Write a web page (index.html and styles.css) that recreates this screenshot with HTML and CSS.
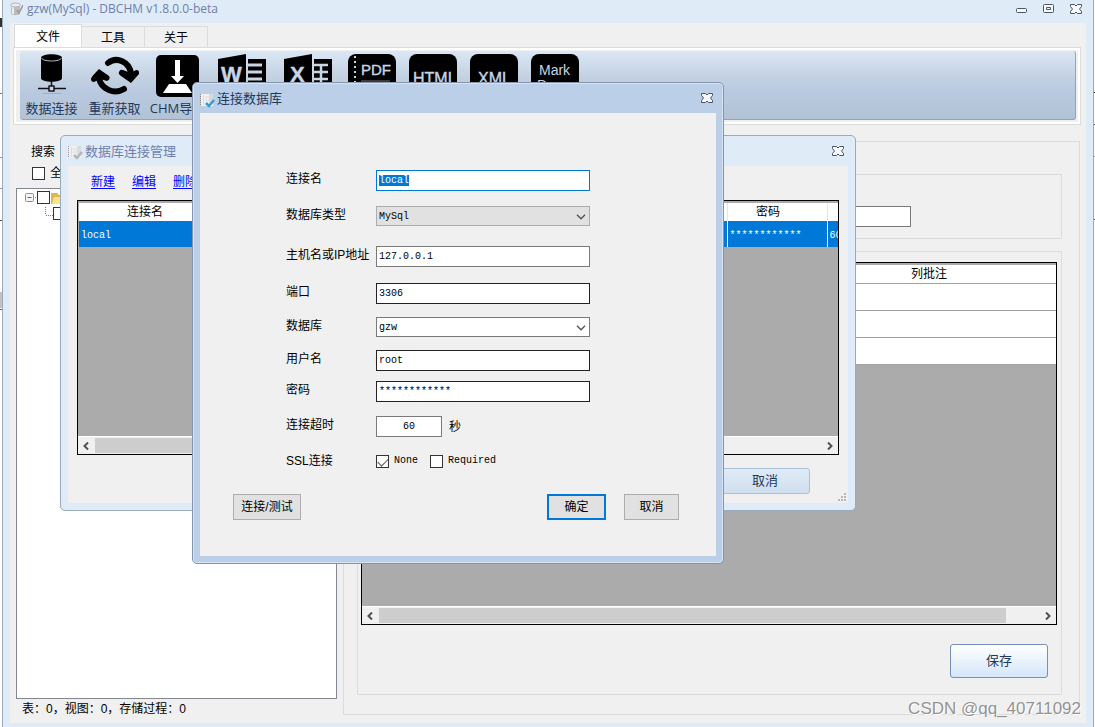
FILE: index.html
```
<!DOCTYPE html>
<html lang="zh-CN">
<head>
<meta charset="utf-8">
<title>gzw(MySql) - DBCHM v1.8.0.0-beta</title>
<link rel="stylesheet" href="styles.css">
</head>
<body>
<svg class="defs" width="0" height="0" aria-hidden="true">
  <symbol id="close" viewBox="0 0 12 10">
    <path d="M.5.5h4L6 2 7.500.5h4v2L9.500 5l2 2.500v2h-4L6 8 4.500 9.500h-4v-2l2-2.500-2-2.500z" fill="#f6f9fd" stroke="#4c5468"/>
  </symbol>
  <symbol id="left" viewBox="0 0 8 8"><path d="M6 .5 2.500 4 6 7.500" fill="none" stroke="#505050" stroke-width="2"/></symbol>
  <symbol id="right" viewBox="0 0 8 8"><path d="M2 .5 5.500 4 2 7.500" fill="none" stroke="#505050" stroke-width="2"/></symbol>
  <symbol id="down" viewBox="0 0 10 6"><path d="M1 .8 5 4.800 9 .8" fill="none" stroke="#505050" stroke-width="1.300"/></symbol>
  <symbol id="note" viewBox="0 0 15 15">
    <path d="M1 1h12v12H1z" fill="#f2f2f2"/><path d="M9 1h4v9H9z" fill="#d5d8dc"/>
    <path d="M.5 1v12" stroke="#888" stroke-dasharray="1 1"/><path d="M3.500 2v10M5 4h6M5 7h6" stroke="#dadada"/>
    <path d="m6 10 3 3 5-6" fill="none" stroke="currentColor" stroke-width="2.500"/>
  </symbol>
</svg>

<main class="window main-window">
  <header class="titlebar">
    <svg width="13" height="14" viewBox="0 0 13 14"><path d="M1 3v8c0 3 9 3 9 0V3z" fill="#bcbcbc"/><path d="M3 4v8" stroke="#eee" stroke-width="2"/><ellipse cx="5.500" cy="3" rx="5" ry="2" fill="#ececec" stroke="#b5b5b5"/><path d="m7 8 2 3 4-8" fill="none" stroke="#999" stroke-width="1.500"/></svg>
    <h1>gzw(MySql) - DBCHM v1.8.0.0-beta</h1>
    <div class="window-buttons">
      <button type="button" aria-label="最小化"><svg width="12" height="10"><rect x=".5" y="4.500" width="10" height="4" rx="1" fill="#f6f9fd" stroke="#4c5468"/></svg></button>
      <button type="button" aria-label="最大化"><svg width="12" height="10"><rect x=".5" y=".5" width="10" height="8" rx="1" fill="#f6f9fd" stroke="#4c5468"/><path d="M3.500 3.500h4v2h-4z" fill="none" stroke="#4c5468"/></svg></button>
      <button type="button" aria-label="关闭"><svg width="12" height="10"><use href="#close"/></svg></button>
    </div>
  </header>
  <div class="client">
    <nav class="tabs">
      <button type="button" class="tab active">文件</button>
      <button type="button" class="tab">工具</button>
      <button type="button" class="tab">关于</button>
    </nav>
    <div class="tab-page">
      <div class="toolbar">
        <button type="button" class="tool">
          <svg width="48" height="46" viewBox="0 1 48 46"><path d="M13 5c0-5 21-5 21 0v20c0 5-21 5-21 0z"/><path d="M13.500 5c1 4 19 4 20 0" fill="none" stroke="#a9b6c6"/><path d="M23.500 28v5M10 35.500h28" stroke="#111" stroke-width="1.500"/><rect x="21" y="33" width="5" height="5" fill="#c5d3e5" stroke="#000" stroke-width="1.300"/><path d="M14 40.500h20" stroke="#8fa0b4" opacity=".6"/></svg>
          数据连接</button>
        <button type="button" class="tool">
          <svg width="48" height="46" viewBox="0 1 48 46"><g fill="none" stroke="#000" stroke-width="6" stroke-linecap="round"><path d="M17 10C26 3 38 9 40 20"/><path d="M33 36C23 42 10 36 8 25"/></g><path d="M28 19q1-3 4-2l8 3 5-3q4 0 3 4l-8 9-10-7q-3-2-2-4zM0 26q0-2 8-10l10 7q2 3-2 5l-7-2-6 3q-3 0-3-3z"/></svg>
          重新获取</button>
        <button type="button" class="tool">
          <svg width="43" height="46" viewBox="0 1 43 46"><rect y="2" width="43" height="42" rx="5"/><path d="M19 7h5v16h4l-6.500 7-6.500-7h4zM13 31h17l6 9H7z" fill="#fff"/></svg>
          CHM导出</button>
        <button type="button" class="tool" aria-label="Word">
          <svg width="48" height="48" viewBox="0 0 48 48"><path d="M0 5 28 0v48L0 43z"/><path d="M30 5h18v38H30z"/><path d="M30 11h14M30 18h14M30 25h14" stroke="#c9d5e5" stroke-width="3"/><text x="3" y="28" class="glyph bold" font-size="22">W</text></svg></button>
        <button type="button" class="tool" aria-label="Excel">
          <svg width="48" height="48" viewBox="0 0 48 48"><path d="M0 5 28 0v48L0 43z"/><path d="M30 5h18v38H30z"/><path d="M30 11h14M30 18h14M30 25h14M37 10v20" stroke="#c9d5e5" stroke-width="2.500"/><text x="6" y="28" class="glyph bold" font-size="22">X</text></svg></button>
        <button type="button" class="tool">
          <svg width="48" height="48" viewBox="0 0 48 48"><rect width="48" height="48" rx="8"/><path d="M7 2v40" stroke="#c9d5e5" stroke-width="2" stroke-dasharray="2 3"/><path d="M13 27h29" stroke="#777"/><text x="13" y="21" class="glyph" font-size="15">PDF</text></svg></button>
        <button type="button" class="tool">
          <svg width="48" height="48" viewBox="0 0 48 48"><rect width="48" height="48" rx="8"/><text x="4" y="30" class="glyph" font-size="16">HTML</text></svg></button>
        <button type="button" class="tool">
          <svg width="48" height="48" viewBox="0 0 48 48"><rect width="48" height="48" rx="8"/><text x="8" y="30" class="glyph" font-size="16">XML</text></svg></button>
        <button type="button" class="tool">
          <svg width="48" height="48" viewBox="0 0 48 48"><rect width="48" height="48" rx="8"/><text x="8" y="21" class="glyph thin" font-size="14">Mark</text><text x="6" y="36" class="glyph thin" font-size="14">Down</text></svg></button>
      </div>
    </div>
    <div class="workspace">
      <section class="sidebar">
        <span class="search-label">搜索</span>
        <label class="check all"><input type="checkbox"> 全选</label>
        <div class="tree">
          <div class="node">
            <svg width="12" height="13"><rect x=".5" y="2.500" width="8" height="8" rx="1" fill="#f4f4f4" stroke="#919191"/><path d="M2.500 6.500h4" stroke="#4b63a7"/><path d="M10 6.500h2" stroke="#888" stroke-dasharray="1 1"/></svg>
            <input type="checkbox" aria-label="根节点">
            <svg width="16" height="13"><path d="M1 2h6l2 2h6v9H1z" fill="#e3b64d"/><path d="M4 6h12l-3 7H2z" fill="#fbe38e"/></svg>
          </div>
          <div class="node child">
            <svg width="8" height="13"><path d="M.5 0v8M1 8.500h7" fill="none" stroke="#777" stroke-dasharray="1 1"/></svg>
            <input type="checkbox" aria-label="子节点">
          </div>
        </div>
        <p class="status">表：0，视图：0，存储过程：0</p>
      </section>
      <section class="detail">
        <div class="group top-group"><input type="text" aria-label="表批注"></div>
        <div class="group grid-group">
          <div class="data-grid">
            <table class="columns-table">
              <thead><tr><th></th><th>列批注</th></tr></thead>
              <tbody><tr><td></td><td></td></tr><tr><td></td><td></td></tr><tr><td></td><td></td></tr></tbody>
            </table>
            <div class="scrollbar"><svg width="8" height="8"><use href="#left"/></svg><span class="track"><span class="thumb wide"></span></span><svg width="8" height="8"><use href="#right"/></svg></div>
          </div>
          <button type="button" class="glossy save">保存</button>
        </div>
      </section>
    </div>
  </div>
</main>

<section class="window manager" aria-label="数据库连接管理">
  <header class="titlebar">
    <svg class="pale" width="15" height="15"><use href="#note"/></svg>
    <h2>数据库连接管理</h2>
    <div class="window-buttons"><button type="button" aria-label="关闭"><svg width="12" height="10"><use href="#close"/></svg></button></div>
  </header>
  <div class="client">
    <nav class="links"><a href="#new">新建</a><a href="#edit">编辑</a><a href="#delete">删除</a></nav>
    <div class="data-grid">
      <table class="connections">
        <thead><tr><th class="name">连接名</th><th></th><th class="secret">密码</th><th class="timeout"></th></tr></thead>
        <tbody><tr><td>local</td><td></td><td>************</td><td>60</td></tr></tbody>
      </table>
      <div class="scrollbar"><svg width="8" height="8"><use href="#left"/></svg><span class="track"><span class="thumb"></span></span><svg width="8" height="8"><use href="#right"/></svg></div>
    </div>
    <button type="button" class="glossy dismiss">取消</button>
    <svg class="grip" width="8" height="8"><path d="M6 0h2v2H6zM3 3h2v2H3zM6 3h2v2H6zM0 6h2v2H0zM3 6h2v2H3zM6 6h2v2H6z" fill="#b8b8b8"/></svg>
  </div>
</section>

<section class="window dialog" aria-label="连接数据库">
  <header class="titlebar">
    <svg width="15" height="15"><use href="#note"/></svg>
    <h2>连接数据库</h2>
    <div class="window-buttons"><button type="button" aria-label="关闭"><svg width="12" height="10"><use href="#close"/></svg></button></div>
  </header>
  <form class="client">
    <div class="fields">
      <label for="name">连接名</label><input id="name" class="focus" type="text" value="local">
      <label for="type">数据库类型</label><div class="select"><select id="type" class="gray"><option>MySql</option></select><svg width="10" height="6"><use href="#down"/></svg></div>
      <label for="host">主机名或IP地址</label><input id="host" type="text" value="127.0.0.1">
      <label for="port">端口</label><input id="port" class="dark" type="text" value="3306">
      <label for="db">数据库</label><div class="select"><select id="db"><option>gzw</option></select><svg width="10" height="6"><use href="#down"/></svg></div>
      <label for="user">用户名</label><input id="user" class="dark" type="text" value="root">
      <label for="pass">密码</label><input id="pass" class="dark" type="text" value="************">
      <label for="wait">连接超时</label><div class="inline"><input id="wait" class="short" type="text" value="60"><span>秒</span></div>
      <span>SSL连接</span>
      <div class="inline">
        <label class="check mono"><input type="checkbox" checked>None</label>
        <label class="check mono"><input type="checkbox">Required</label>
      </div>
    </div>
    <div class="actions">
      <button type="button" class="plain test">连接/测试</button>
      <button type="button" class="plain primary">确定</button>
      <button type="button" class="plain">取消</button>
    </div>
  </form>
</section>
<div class="watermark">CSDN @qq_40711092</div>
<script src="script.js"></script>
</body>
</html>
```

FILE: styles.css
```
* { box-sizing: border-box; }

body {
  margin: 0;
  height: 100vh;
  overflow: hidden;
  padding: 0 1px 0 2px;
  position: relative;
  color: #000;
  font: 12px/18px "Liberation Sans", "Noto Sans CJK SC", sans-serif;
  background:
    linear-gradient(#333, #333) 0 18px / 2px 9px no-repeat,
    linear-gradient(#777, #777) 0 93px / 2px 1px no-repeat,
    linear-gradient(#999, #999) 0 157px / 2px 1px no-repeat,
    linear-gradient(#999, #999) 0 188px / 2px 1px no-repeat,
    linear-gradient(#555, #555) 0 220px / 2px 1px no-repeat,
    linear-gradient(#c4c0c4, #c4c0c4) 0 292px / 2px 16px no-repeat,
    linear-gradient(#f22, #f22) 0 309px / 2px 1px no-repeat,
    linear-gradient(#111, #111) 100% 92px / 2px 1px no-repeat,
    linear-gradient(#444, #444) 100% 124px / 2px 1px no-repeat,
    linear-gradient(#999, #999) 100% 156px / 2px 1px no-repeat,
    linear-gradient(#444, #444) 100% 219px / 2px 1px no-repeat,
    #fff;
}

h1, h2, p { margin: 0; font-weight: normal; }
button, input, select { font: inherit; color: inherit; margin: 0; }
button { padding: 0; }
svg { display: block; flex: none; }
.defs { position: absolute; }

/* Window frames */
.window { display: flex; flex-direction: column; background: #dfebf7; border: 1px solid #9aa9bb; }
.main-window { height: 100vh; padding: 0 7px 4px; border-width: 0 1px; }
.titlebar { display: flex; align-items: center; height: 30px; gap: 2px; color: #6d7fae; }
.titlebar h1 { font: 12px/18px "Open Sans", sans-serif; }
.titlebar h2 { font: 13px/18px "Noto Sans CJK SC", sans-serif; }
.main-window > .titlebar { height: 23px; padding-bottom: 5px; gap: 4px; }
.window-buttons { display: flex; gap: 15px; margin-left: auto; padding-right: 3px; }
.main-window .window-buttons { padding-right: 4px; }
.window-buttons button { width: 12px; height: 10px; border: 0; background: none; }
.client { flex: 1; min-height: 0; display: flex; flex-direction: column; background: #f0f0f0; }

/* Main window tabs and ribbon */
.tabs { display: flex; align-items: flex-end; height: 24px; padding: 0 4px; }
.tab { width: 63px; height: 21px; border: 1px solid #dcdcdc; border-left: 0; border-bottom: 0; background: #f0f0f0; padding-top: 2px; }
.tab.active { width: 68px; height: 23px; border-left: 1px solid #dcdcdc; background: #fff; }
.tab-page { margin: 0 5px 0 3px; padding: 3px 4px 4px 6px; border: 1px solid #dcdcdc; background: #f0f0f0; box-shadow: inset 0 0 0 2px #fff; }
.toolbar {
  display: flex;
  align-items: flex-start;
  height: 69px;
  padding-top: 3px;
  overflow: hidden;
  border: 1px solid #8ba3c4;
  border-top: 0;
  border-left: 0;
  border-radius: 3px;
  background: linear-gradient(#dbe7f5 0, #c3d1e1 38%, #b9c9e0 60%, #b2c3d6 100%);
}
.tool { flex: none; display: flex; flex-direction: column; align-items: center; width: 61px; border: 0; background: none; color: #1e395b; font: 13px/16px "Open Sans", "Noto Sans CJK SC", sans-serif; white-space: nowrap; }
.tool:nth-child(-n+3) { width: 63px; }
.tool:nth-child(4), .tool:nth-child(5) { width: 66px; }
.glyph { fill: #c9d5e5; stroke: #c9d5e5; stroke-width: .4px; font-family: "Liberation Sans", sans-serif; }
.glyph.bold { font-weight: bold; }
.glyph.thin { stroke: none; }

.workspace { flex: 1; min-height: 0; display: flex; padding: 16px 6px 8px; }
.sidebar { flex: none; width: 321px; display: flex; flex-direction: column; }
.search-label { padding: 2px 0 0 15px; }
.check { display: flex; align-items: center; gap: 5px; }
.check.all { height: 20px; padding-left: 16px; margin: 2px 0 5px; }
input[type="checkbox"] { appearance: none; flex: none; width: 13px; height: 13px; border: 1px solid #333; background: #fff; }
input[type="checkbox"]:checked::before { content: ""; display: block; width: 9px; height: 5px; margin: 2px 1px; border: solid #555; border-width: 0 0 1px 1px; transform: rotate(-45deg); }
.tree { flex: 1; border: 1px solid #828790; background: #fff; padding: 2px 8px; }
.node { display: flex; height: 16px; }
.node.child { padding-left: 20px; }
.status { height: 16px; padding-left: 6px; line-height: 20px; }

.detail { flex: 1; display: flex; flex-direction: column; margin-left: 6px; padding: 32px 17px 19px 13px; border: 1px solid #dcdcdc; }
.group { border: 1px solid #dcdcdc; }
.top-group { height: 65px; padding: 31px 150px 0 12px; margin-bottom: 12px; }
.grid-group { flex: 1; display: flex; flex-direction: column; padding: 10px 4px 16px 3px; }
.data-grid { flex: 1; display: flex; flex-direction: column; border: 1px solid #000; background: #ababab; overflow: hidden; }
table { width: 100%; border-collapse: collapse; table-layout: fixed; background: #fff; }
th { padding: 0; font-weight: normal; text-align: center; }
.columns-table { border-top: 2px solid #aaa; }
.columns-table th { height: 18px; }
.columns-table th:last-child { width: 254px; }
.columns-table tr { height: 27px; border-bottom: 1px solid #a0a0a0; }
.columns-table thead tr { height: 18px; }
.scrollbar { display: flex; align-items: center; gap: 5px; height: 18px; margin-top: auto; padding: 1px 4px; background: #f0f0f0; border-top: 1px solid #fff; }
.track { flex: 1; height: 15px; }
.thumb { display: block; width: 80%; height: 15px; background: #cdcdcd; }
.thumb.wide { width: 95%; }
.glossy { color: #1e395b; font: 13px/18px "Noto Sans CJK SC", sans-serif; border: 1px solid #7491b5; border-radius: 3px; background: linear-gradient(#fff, #eaf3fc 50%, #d4e6fa); padding-bottom: 2px; }
.save { align-self: flex-end; width: 98px; height: 34px; margin: 19px 9px 0 0; }

/* Connection manager */
.manager { position: absolute; left: 60px; top: 135px; width: 796px; height: 376px; padding: 0 7px 7px; border-radius: 5px; }
.manager > .client { padding: 7px 9px 9px; position: relative; }
.manager > .titlebar .pale { margin-top: 3px; color: #aaa; opacity: .8; }
.manager .window-buttons { padding-right: 4px; }
.links { display: flex; gap: 17px; padding-left: 14px; margin-bottom: 9px; }
.links a { color: #00f; text-underline-offset: 2px; }
.connections { border-top: 2px solid #aaa; border-left: 1px solid #aaa; }
.connections th { height: 19px; }
.connections .name { width: 133px; }
.connections .secret { width: 100px; padding-right: 18px; }
.connections .timeout { width: 11px; }
.connections th { border-right: 1px solid #e5e5e5; }
.connections td { height: 26px; padding: 3px 2px 0; color: #fff; background: #0078d7; border-right: 1px solid #fff; font: 10px/18px "Liberation Mono", monospace; overflow: hidden; white-space: nowrap; }
.connections td:last-child, .connections th:last-child { border-right: 0; }
.manager .data-grid { flex: 1; }
.dismiss { align-self: flex-end; width: 90px; height: 26px; margin: 13px 29px 0 0; border-color: #abc0d9; background: linear-gradient(#dfebf7, #d0dfef); }
.grip { position: absolute; right: 2px; bottom: 2px; }

/* Connection dialog */
.dialog { position: absolute; left: 192px; top: 82px; width: 532px; height: 482px; padding: 0 7px 7px; border-radius: 5px; border-color: #8795ab; background: #bccfe8; box-shadow: inset 0 0 0 1px #d5e3f4; }
.dialog > .titlebar { color: #1e395b; }
.dialog > .titlebar > svg { margin-top: 4px; color: #3c9bd5; }
.dialog > .client { padding: 57px 37px 36px 33px; justify-content: space-between; }
.fields { display: grid; grid-template-columns: 90px 214px; grid-template-rows: 36px 40px 37px 34px 33px 31px 35px 36px 18px; align-items: start; padding-left: 53px; }
input[type="text"] { width: 100%; height: 21px; padding: 0 2px 1px; border: 1px solid #7a7a7a; border-radius: 0; outline: 0; background: #fff; font: 10px/16px "Liberation Mono", monospace; }
.fields input.dark { border-color: #222; }
.fields input.focus { border-color: #0078d7; }
.fields input::selection { color: #fff; background: #0078d7; }
.top-group input[type="text"] { display: block; }
.fields input.short { width: 66px; text-align: center; }
.select { position: relative; }
.select svg { position: absolute; right: 4px; top: 8px; pointer-events: none; }
select { appearance: none; display: block; width: 100%; height: 20px; padding: 1px 2px 0; border: 1px solid #7a7a7a; border-radius: 0; background: #fff; font: 10px/18px "Liberation Mono", monospace; }
select.gray { border-color: #adadad; background: #e1e1e1; }
.inline { display: flex; align-items: center; gap: 7px; }
.inline .check + .check { margin-left: 5px; }
.mono { font: 10px/18px "Liberation Mono", monospace; }
.actions { display: flex; align-items: center; gap: 18px; }
.plain { width: 55px; height: 26px; border: 1px solid #adadad; background: #e1e1e1; }
.plain.test { width: 68px; margin-right: auto; }
.plain.primary { width: 59px; border: 2px solid #0078d7; }

.watermark { position: absolute; right: 14px; bottom: 8px; font: 17px/20px "Liberation Sans", sans-serif; color: rgba(120, 120, 120, .8); text-shadow: 1px 1px #fff; }
```

FILE: script.js
```
const nameField = document.getElementById("name");
nameField.focus();
nameField.select();
```
